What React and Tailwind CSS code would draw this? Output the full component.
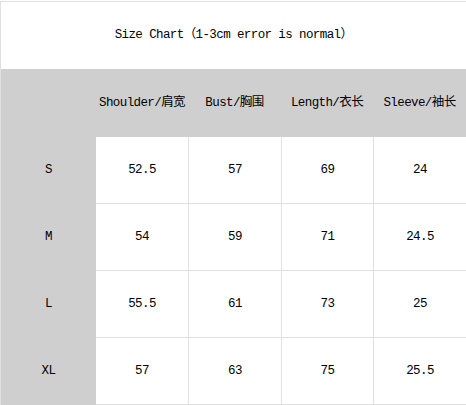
import React from 'react';

const headers = ['Shoulder/肩宽', 'Bust/胸围', 'Length/衣长', 'Sleeve/袖长'];

const rows = [
  { size: 'S', values: ['52.5', '57', '69', '24'] },
  { size: 'M', values: ['54', '59', '71', '24.5'] },
  { size: 'L', values: ['55.5', '61', '73', '25'] },
  { size: 'XL', values: ['57', '63', '75', '25.5'] },
];

const font = {
  fontFamily: '"Liberation Mono", "Noto Sans CJK SC", monospace',
};

const SizeChart = () => {
  return (
    <div className="w-[466px] h-[405px] bg-white text-black text-[12.5px] tracking-[-0.6px] overflow-hidden" style={font}>
      <div className="border-t border-l border-[#e0e0e0] mt-px">
        <div className="h-[67px] flex items-center justify-center">
          Size Chart（1-3cm error is normal）
        </div>

        <div className="h-[68px] grid grid-cols-[95px_92px_93px_92px_93px] bg-[#d0cfd0]">
          <div />
          {headers.map((h) => (
            <div key={h} className="flex items-center justify-center whitespace-nowrap">
              {h}
            </div>
          ))}
        </div>

        {rows.map((row) => (
          <div key={row.size} className="h-[67px] grid grid-cols-[95px_92px_93px_92px_93px]">
            <div className="bg-[#d0cfd0] flex items-center justify-center">{row.size}</div>
            {row.values.map((v, i) => (
              <div
                key={i}
                className={`flex items-center justify-center border-b border-[#e0e0e0] ${i > 0 ? 'border-l' : ''}`}
              >
                {v}
              </div>
            ))}
          </div>
        ))}
      </div>
    </div>
  );
};

export default function App() {
  return <SizeChart />;
}
